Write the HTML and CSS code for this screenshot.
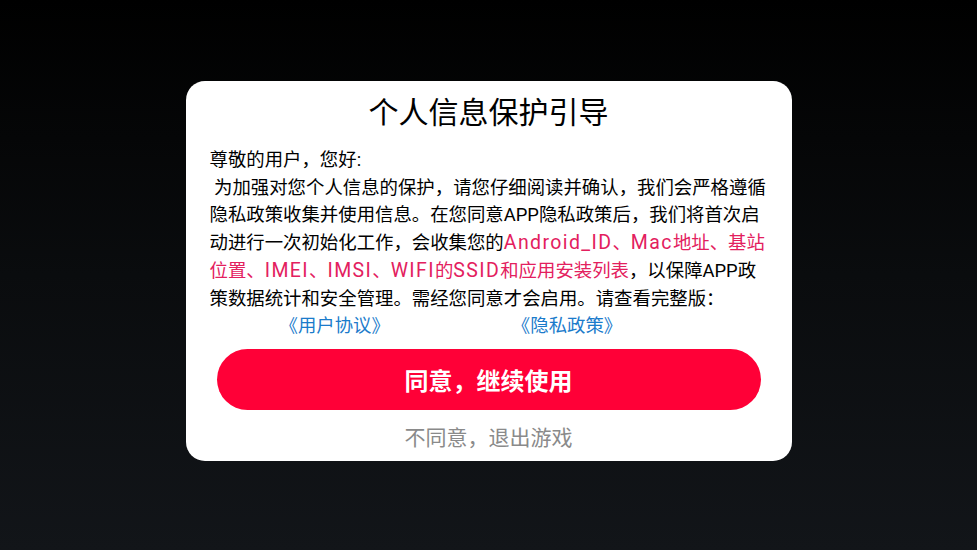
FILE: index.html
```html
<!DOCTYPE html>
<html lang="zh-CN">
<head>
<meta charset="utf-8">
<title>个人信息保护引导</title>
<link rel="stylesheet" href="styles.css">
</head>
<body>
<div class="dialog">
  <h1 class="title">个人信息保护引导</h1>
  <div class="body">
    <p class="text">尊敬的用户，您好:<br>&nbsp;为加强对您个人信息的保护，请您仔细阅读并确认，我们会严格遵循<br>隐私政策收集并使用信息。在您同意APP隐私政策后，我们将首次启<br>动进行一次初始化工作，会收集您的<span class="hl"><span class="lat">Android_ID</span>、<span class="lat">Mac</span>地址、基站<br>位置、<span class="lat">IMEI</span>、<span class="lat">IMSI</span>、<span class="lat">WIFI</span>的<span class="lat">SSID</span>和应用安装列表</span>，以保障APP政<br>策数据统计和安全管理。需经您同意才会启用。请查看完整版：</p>
    <div class="links">
      <a class="link">《用户协议》</a>
      <a class="link">《隐私政策》</a>
    </div>
  </div>
  <button class="agree">同意，继续使用</button>
  <div class="disagree">不同意，退出游戏</div>
</div>
</body>
</html>
```
FILE: styles.css
```css
html, body {
  margin: 0;
  padding: 0;
}
body {
  width: 977px;
  height: 550px;
  background: linear-gradient(180deg, #000000 0%, #0a0c0e 50%, #121519 100%);
  display: flex;
  justify-content: center;
  align-items: flex-start;
  padding-top: 81px;
  box-sizing: border-box;
  font-family: "Roboto", "Noto Sans CJK SC", sans-serif;
}
.dialog {
  width: 606px;
  height: 380px;
  box-sizing: border-box;
  background: #ffffff;
  border-radius: 19px;
  padding: 12px 24px 0;
  display: flex;
  flex-direction: column;
}
.title {
  margin: 0;
  font-size: 30px;
  line-height: 40px;
  font-weight: 400;
  color: #000;
  text-align: center;
}
.body {
  margin-top: 13px;
  width: 562px;
}
.text {
  margin: 0;
  font-size: 18.4px;
  line-height: 27.7px;
  color: #000;
  white-space: nowrap;
}
.hl {
  color: #e3205e;
}
.lat {
  font-size: 19.5px;
  line-height: 20px;
  letter-spacing: 1.4px;
}
.links {
  display: flex;
  gap: 122px;
  padding-left: 70px;
  font-size: 18.4px;
  line-height: 28px;
}
.link {
  color: #1b7bcb;
}
.agree {
  margin: 9px 7px 0;
  height: 61px;
  border: none;
  border-radius: 31px;
  background: #ff0037;
  color: #ffffff;
  font-family: inherit;
  font-size: 24px;
  font-weight: 700;
  padding: 0;
}
.disagree {
  margin-top: 13px;
  text-align: center;
  font-size: 21px;
  line-height: 30px;
  color: #8a8a8a;
}
```
